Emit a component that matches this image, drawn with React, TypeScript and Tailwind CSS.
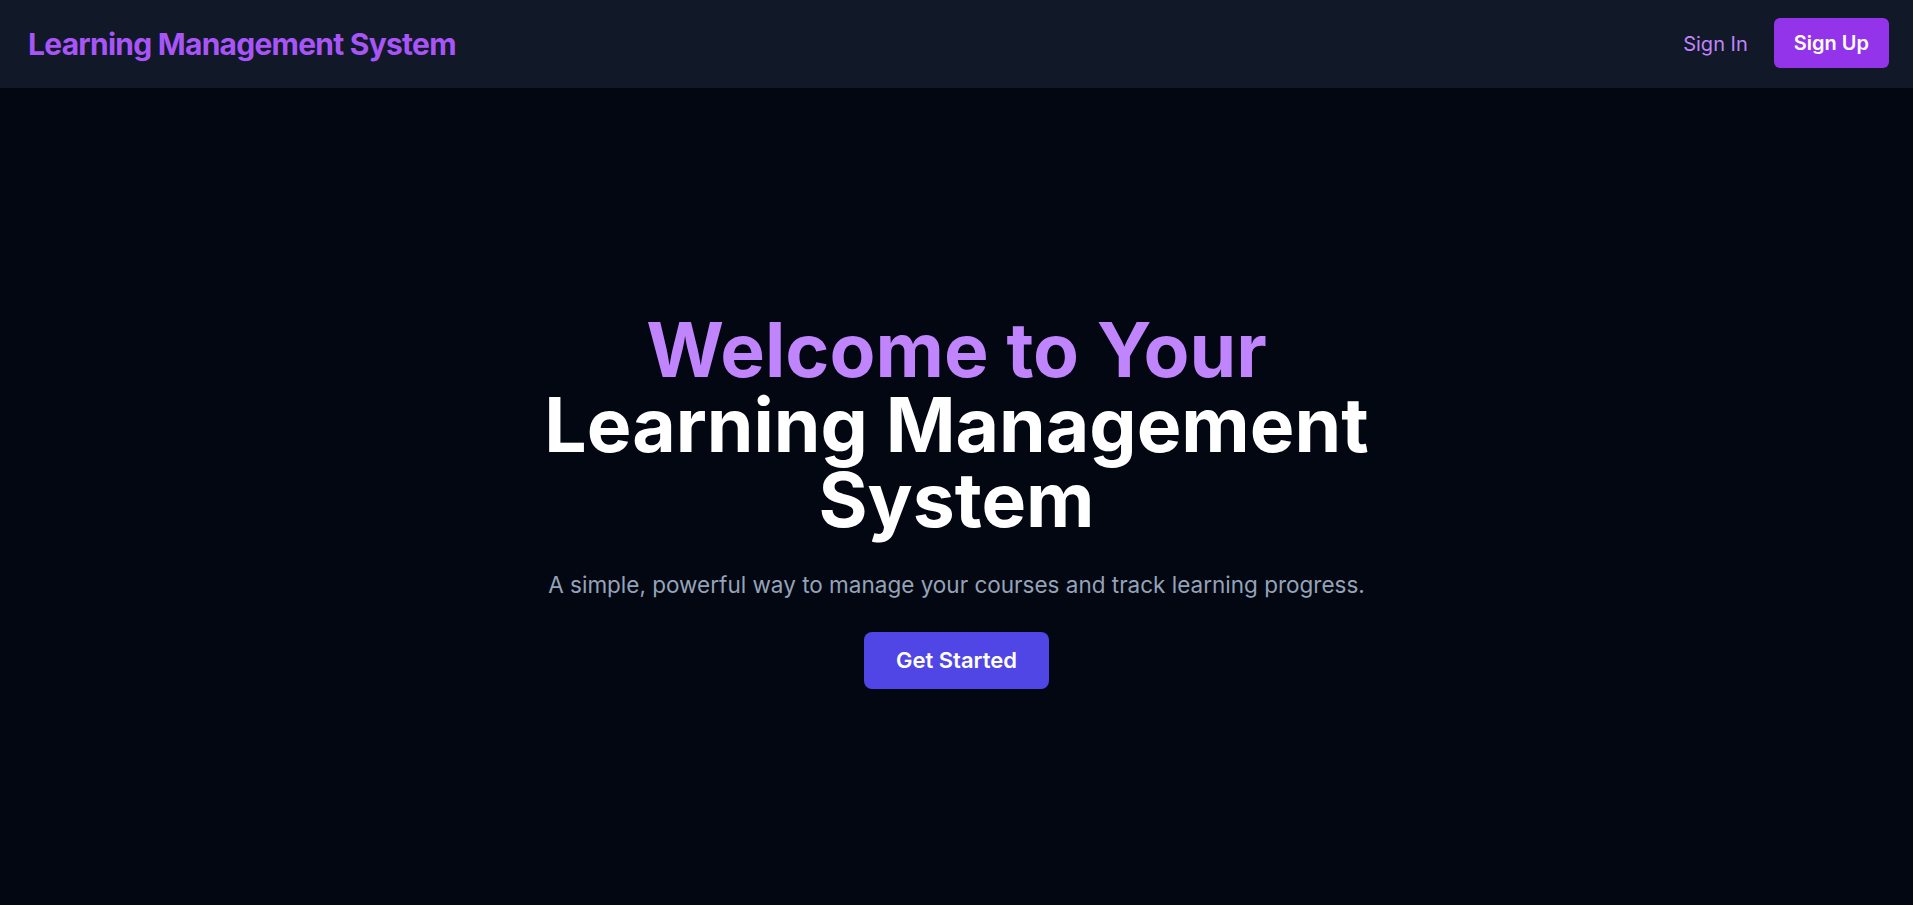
export default function App() {
  return (
    <div className="min-h-screen flex flex-col bg-[#030712] font-['Inter',sans-serif]">
      {/* Header */}
      <header className="h-[88px] bg-[#111827] flex items-center justify-between pl-7 pr-6 shrink-0">
        <a href="#" className="text-3xl font-bold tracking-tight text-[#a855f7]">
          Learning Management System
        </a>
        <nav className="flex items-center gap-[26px]">
          <a href="#" className="text-xl text-[#c084fc]">
            Sign In
          </a>
          <a
            href="#"
            className="px-5 py-[11px] rounded-md bg-[#9333ea] text-xl font-semibold text-white leading-7 -mt-0.5"
          >
            Sign Up
          </a>
        </nav>
      </header>

      {/* Hero */}
      <main className="flex-1 flex flex-col items-center justify-center text-center pt-2">
        <h1 className="text-[75px] font-bold leading-none">
          <span className="block text-[#c084fc]">Welcome to Your</span>
          <span className="block text-white">
            Learning Management
            <br />
            System
          </span>
        </h1>
        <p className="mt-[30px] text-[22.5px] leading-[35px] text-[#94a3b8]">
          A simple, powerful way to manage your courses and track learning progress.
        </p>
        <a
          href="#"
          className="mt-[30px] px-8 py-[14px] rounded-lg bg-[#4f46e5] text-[22px] font-semibold text-white leading-[29px]"
        >
          Get Started
        </a>
      </main>
    </div>
  );
}
